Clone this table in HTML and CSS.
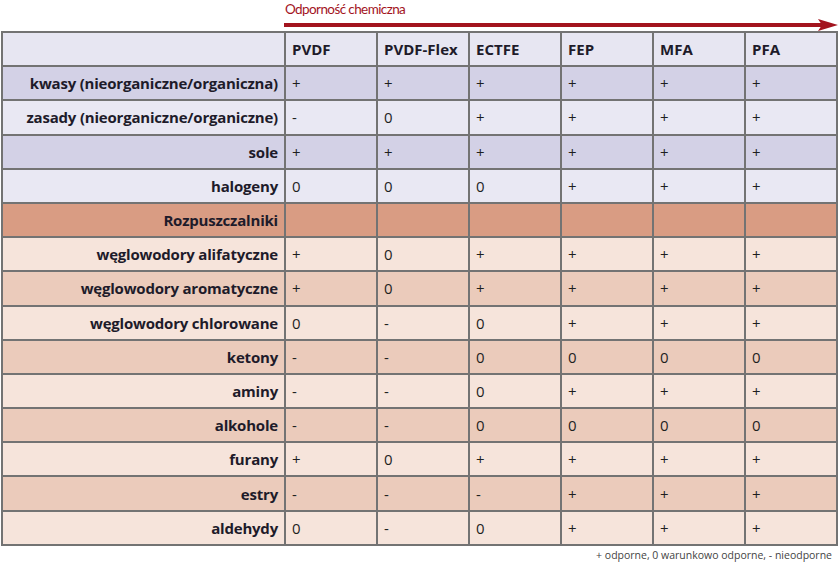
FILE: index.html
```html
<!DOCTYPE html>
<html lang="pl">
<head>
<meta charset="utf-8">
<link rel="stylesheet" href="styles.css">
</head>
<body>
<div class="page">
  <div class="top">
    <div class="spacer"></div>
    <div class="arrow-wrap">
      <div class="arrow-title">Odporność chemiczna</div>
      <div class="arrow">
        <div class="shaft"></div>
        <svg class="head" width="20" height="12" viewBox="0 0 20 12"><path d="M0 0 L20 6 L0 12 L4 6 Z" fill="#a3141e"/></svg>
      </div>
    </div>
  </div>
  <table class="grid">
    <colgroup>
      <col class="c-label"><col class="c-val"><col class="c-val"><col class="c-val"><col class="c-val"><col class="c-val"><col class="c-val">
    </colgroup>
    <tr class="head-row"><th></th><th>PVDF</th><th>PVDF-Flex</th><th>ECTFE</th><th>FEP</th><th>MFA</th><th>PFA</th></tr>
    <tr class="b-dark"><th>kwasy (nieorganiczne/organiczna)</th><td>+</td><td>+</td><td>+</td><td>+</td><td>+</td><td>+</td></tr>
    <tr class="b-light"><th>zasady (nieorganiczne/organiczne)</th><td>-</td><td>0</td><td>+</td><td>+</td><td>+</td><td>+</td></tr>
    <tr class="b-dark"><th>sole</th><td>+</td><td>+</td><td>+</td><td>+</td><td>+</td><td>+</td></tr>
    <tr class="b-light"><th>halogeny</th><td>0</td><td>0</td><td>0</td><td>+</td><td>+</td><td>+</td></tr>
    <tr class="section"><th>Rozpuszczalniki</th><td></td><td></td><td></td><td></td><td></td><td></td></tr>
    <tr class="o-light"><th>węglowodory alifatyczne</th><td>+</td><td>0</td><td>+</td><td>+</td><td>+</td><td>+</td></tr>
    <tr class="o-dark"><th>węglowodory aromatyczne</th><td>+</td><td>0</td><td>+</td><td>+</td><td>+</td><td>+</td></tr>
    <tr class="o-light"><th>węglowodory chlorowane</th><td>0</td><td>-</td><td>0</td><td>+</td><td>+</td><td>+</td></tr>
    <tr class="o-dark"><th>ketony</th><td>-</td><td>-</td><td>0</td><td>0</td><td>0</td><td>0</td></tr>
    <tr class="o-light"><th>aminy</th><td>-</td><td>-</td><td>0</td><td>+</td><td>+</td><td>+</td></tr>
    <tr class="o-dark"><th>alkohole</th><td>-</td><td>-</td><td>0</td><td>0</td><td>0</td><td>0</td></tr>
    <tr class="o-light"><th>furany</th><td>+</td><td>0</td><td>+</td><td>+</td><td>+</td><td>+</td></tr>
    <tr class="o-dark"><th>estry</th><td>-</td><td>-</td><td>-</td><td>+</td><td>+</td><td>+</td></tr>
    <tr class="o-light"><th>aldehydy</th><td>0</td><td>-</td><td>0</td><td>+</td><td>+</td><td>+</td></tr>
  </table>
  <div class="legend">+ odporne, 0 warunkowo odporne, - nieodporne</div>
</div>
</body>
</html>
```

FILE: styles.css
```css
html, body {
  margin: 0;
  padding: 0;
  background: #ffffff;
}
.page {
  width: 840px;
  height: 563px;
  display: flex;
  flex-direction: column;
  font-family: "Open Sans", Lato, sans-serif;
  color: #1a1a1a;
}
.top {
  height: 31px;
  display: flex;
}
.spacer {
  width: 284px;
  flex: none;
}
.arrow-wrap {
  flex: 1;
  display: flex;
  flex-direction: column;
}
.arrow-title {
  font-family: Lato, sans-serif;
  font-size: 13.5px;
  color: #a3141e;
  padding-left: 1px;
  height: 19px;
  line-height: 18px;
  letter-spacing: -0.6px;
}
.arrow {
  display: flex;
  align-items: center;
  height: 12px;
  margin-right: 2px;
}
.shaft {
  flex: 1;
  height: 4px;
  background: #a3141e;
}
.head {
  flex: none;
  margin-left: -4px;
}
.grid {
  margin-left: 1px;
  width: 836px;
  border-collapse: collapse;
  table-layout: fixed;
  font-size: 15px;
}
.c-label { width: 283px; }
.c-val { width: 92px; }
.grid th, .grid td {
  border: 2px solid #737373;
  height: 32.2px;
  padding: 0 6px;
  white-space: nowrap;
}
.grid th {
  text-align: right;
  font-weight: 700;
  color: #1e1b2a;
  letter-spacing: -0.2px;
}
.grid td {
  text-align: left;
  font-weight: 400;
  color: #1f1f1f;
}
.head-row th {
  text-align: left;
  background: #e7e6f2;
  letter-spacing: 0;
}
.b-dark th, .b-dark td { background: #d3d1e6; }
.b-light th, .b-light td { background: #e9e8f3; }
.section th, .section td { background: #d99c83; }
.o-light th, .o-light td { background: #f6e4db; }
.o-dark th, .o-dark td { background: #ebcbbb; }
.legend {
  text-align: right;
  padding-right: 8px;
  padding-top: 2px;
  font-size: 10.5px;
  color: #444444;
}
```
